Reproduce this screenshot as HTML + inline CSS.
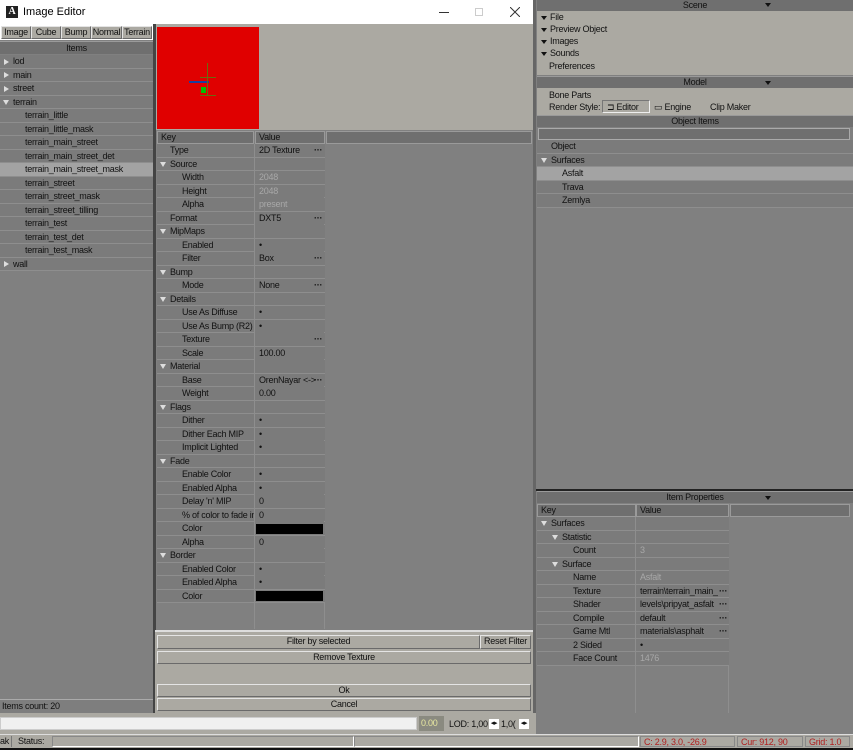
<!DOCTYPE html>
<html><head><meta charset="utf-8"><style>
*{margin:0;padding:0;box-sizing:border-box}
body{width:853px;height:750px;overflow:hidden;background:#808080;font-family:"Liberation Sans",sans-serif;font-size:9px;letter-spacing:-0.25px;color:#111;position:relative}
.a{position:absolute}
.row{position:absolute;height:13.5px;line-height:13px;border-bottom:1px solid #8e8e8e;background:#7b7b7b;white-space:nowrap;overflow:hidden}
.hd{position:absolute;background:#6f6f6f;text-align:center;line-height:12px;border-top:1px solid #9a9a9a}
.tri{display:inline-block;width:0;height:0;border-left:3px solid transparent;border-right:3px solid transparent;border-top:5px solid #ddd;margin-right:4px;vertical-align:middle}
.trr{display:inline-block;width:0;height:0;border-top:3px solid transparent;border-bottom:3px solid transparent;border-left:5px solid #ddd;margin-right:4px;vertical-align:middle}
.trk{display:inline-block;width:0;height:0;border-left:3px solid transparent;border-right:3px solid transparent;border-top:4px solid #111;margin-right:3px;vertical-align:middle}
.btn{position:absolute;background:#aba9a2;border:1px solid #e4e4e4;border-right-color:#6a6a6a;border-bottom-color:#6a6a6a;text-align:center;line-height:11px}
.g{color:#a8a8a8}
</style></head><body>
<div class="a" style="left:0;top:0;width:533px;height:24px;background:#fff"></div>
<div class="a" style="left:6px;top:6px;width:12px;height:12px;background:#222;color:#fff;font-size:10px;line-height:12px;text-align:center;font-family:'Liberation Serif',serif;font-weight:bold">A</div>
<div class="a" style="left:23px;top:6px;font-size:11px;color:#000;letter-spacing:0">Image Editor</div>
<div class="a" style="left:439px;top:12px;width:10px;height:1px;background:#333"></div>
<div class="a" style="left:475px;top:8px;width:8px;height:8px;border:1px solid #ccc"></div>
<svg class="a" style="left:510px;top:7px" width="10" height="10"><path d="M0 0L10 10M10 0L0 10" stroke="#333" stroke-width="1"/></svg>
<div class="a" style="left:533px;top:0;width:3px;height:713px;background:#666"></div>
<div class="a" style="left:0;top:24px;width:153px;height:689px;background:#808080"></div>
<div class="a" style="left:0;top:24px;width:153px;height:16px;background:#fff"></div>
<div class="btn" style="left:1px;top:26px;width:30px;height:13px">Image</div>
<div class="btn" style="left:31px;top:26px;width:30px;height:13px">Cube</div>
<div class="btn" style="left:61px;top:26px;width:30px;height:13px">Bump</div>
<div class="btn" style="left:91px;top:26px;width:31px;height:13px">Normal</div>
<div class="btn" style="left:122px;top:26px;width:30px;height:13px">Terrain</div>
<div class="hd" style="left:0;top:41px;width:153px;height:13px">Items</div>
<div class="row" style="left:0;top:55px;width:153px;padding-left:4px"><span class="trr"></span>lod</div>
<div class="row" style="left:0;top:68.5px;width:153px;padding-left:4px"><span class="trr"></span>main</div>
<div class="row" style="left:0;top:82px;width:153px;padding-left:4px"><span class="trr"></span>street</div>
<div class="row" style="left:0;top:95.5px;width:153px;padding-left:3px"><span class="tri"></span>terrain</div>
<div class="row" style="left:0;top:109px;width:153px;padding-left:25px">terrain_little</div>
<div class="row" style="left:0;top:122.5px;width:153px;padding-left:25px">terrain_little_mask</div>
<div class="row" style="left:0;top:136px;width:153px;padding-left:25px">terrain_main_street</div>
<div class="row" style="left:0;top:149.5px;width:153px;padding-left:25px">terrain_main_street_det</div>
<div class="row" style="left:0;top:163px;width:153px;padding-left:25px;background:#a3a3a3">terrain_main_street_mask</div>
<div class="row" style="left:0;top:176.5px;width:153px;padding-left:25px">terrain_street</div>
<div class="row" style="left:0;top:190px;width:153px;padding-left:25px">terrain_street_mask</div>
<div class="row" style="left:0;top:203.5px;width:153px;padding-left:25px">terrain_street_tilling</div>
<div class="row" style="left:0;top:217px;width:153px;padding-left:25px">terrain_test</div>
<div class="row" style="left:0;top:230.5px;width:153px;padding-left:25px">terrain_test_det</div>
<div class="row" style="left:0;top:244px;width:153px;padding-left:25px">terrain_test_mask</div>
<div class="row" style="left:0;top:257.5px;width:153px;padding-left:4px"><span class="trr"></span>wall</div>
<div class="a" style="left:0;top:699px;width:153px;height:14px;border-top:1px solid #aaa;line-height:13px;padding-left:2px;background:#7e7e7e">Items count: 20</div>
<div class="a" style="left:153px;top:24px;width:3px;height:689px;background:#444"></div>
<div class="a" style="left:156px;top:24px;width:377px;height:106px;background:#aba9a2"></div>
<div class="a" style="left:157px;top:27px;width:102px;height:102px;background:#e00000"></div>
<div class="a" style="left:189px;top:81px;width:20px;height:2px;background:#1a3fa0"></div>
<div class="a" style="left:207px;top:63px;width:1px;height:33px;background:#6a6a10"></div>
<div class="a" style="left:200px;top:77px;width:16px;height:1px;background:#6a6a10"></div>
<div class="a" style="left:200px;top:95px;width:16px;height:1px;background:#6a6a10"></div>
<div class="a" style="left:201px;top:87px;width:5px;height:6px;background:#00c000"></div>
<div class="a" style="left:156px;top:130px;width:377px;height:500px;background:#808080"></div>
<div class="a" style="left:157px;top:131px;width:97px;height:13px;background:#6f6f6f;border:1px solid #9a9a9a;line-height:11px;padding-left:3px">Key</div>
<div class="a" style="left:255px;top:131px;width:70px;height:13px;background:#6f6f6f;border:1px solid #9a9a9a;line-height:11px;padding-left:3px">Value</div>
<div class="a" style="left:326px;top:131px;width:206px;height:13px;background:#6f6f6f;border:1px solid #9a9a9a"></div>
<div class="a" style="left:324px;top:144px;width:1px;height:485px;background:#8e8e8e"></div>
<div id="props"></div>
<div class="a" style="left:155px;top:630px;width:378px;height:83px;background:#aba9a2;border-top:2px solid #ddd"></div>
<div class="btn" style="left:157px;top:635px;width:323px;height:14px">Filter by selected</div>
<div class="btn" style="left:480px;top:635px;width:51px;height:14px">Reset Filter</div>
<div class="btn" style="left:157px;top:651px;width:374px;height:13px">Remove Texture</div>
<div class="btn" style="left:157px;top:684px;width:374px;height:13px">Ok</div>
<div class="btn" style="left:157px;top:698px;width:374px;height:13px">Cancel</div>
<div class="a" style="left:0;top:713px;width:536px;height:21px;background:#aba9a2"></div>
<div class="a" style="left:0;top:717px;width:417px;height:13px;background:#f0f0f0;border:1px solid #ccc"></div>
<div class="a" style="left:419px;top:716px;width:25px;height:15px;background:#8a8a80;color:#e8e8a0;line-height:14px;padding-left:2px">0.00</div>
<div class="a" style="left:449px;top:719px;line-height:11px">LOD: 1,00</div>
<div class="a" style="left:489px;top:719px;width:10px;height:10px;background:#fff;font-size:7px;text-align:center;line-height:10px">◂▸</div>
<div class="a" style="left:501px;top:719px;line-height:11px">1,0(</div>
<div class="a" style="left:519px;top:719px;width:10px;height:10px;background:#fff;font-size:7px;text-align:center;line-height:10px">◂▸</div>
<div class="a" style="left:536px;top:713px;width:317px;height:21px;background:#808080"></div>
<div class="a" style="left:0;top:734px;width:853px;height:14px;background:#aba9a2;border-top:1px solid #ddd"></div>
<div class="a" style="left:0;top:736px;line-height:11px">ak</div>
<div class="a" style="left:11px;top:736px;width:40px;height:11px;border-left:1px solid #777;line-height:11px;padding-left:6px">Status:</div>
<div class="a" style="left:52px;top:736px;width:302px;height:11px;border:1px solid #888;border-right-color:#fff;border-bottom-color:#fff"></div>
<div class="a" style="left:354px;top:736px;width:285px;height:11px;border:1px solid #888;border-right-color:#fff;border-bottom-color:#fff"></div>
<div class="a" style="left:640px;top:736px;width:95px;height:11px;border:1px solid #888;color:#b02020;line-height:10px;padding-left:3px">C: 2.9, 3.0, -26.9</div>
<div class="a" style="left:737px;top:736px;width:66px;height:11px;border:1px solid #888;color:#b02020;line-height:10px;padding-left:3px">Cur: 912, 90</div>
<div class="a" style="left:805px;top:736px;width:45px;height:11px;border:1px solid #888;color:#b02020;line-height:10px;padding-left:3px">Grid: 1.0</div>
<div class="a" style="left:0;top:748px;width:853px;height:2px;background:#111"></div>
<div class="a" style="left:536px;top:0;width:317px;height:491px;background:#808080"></div>
<div class="a" style="left:537px;top:0;width:316px;height:75px;background:#aba9a2"></div>
<div class="hd" style="left:537px;top:0;width:316px;height:11px;line-height:10px;border-top:0">Scene<span class="trk" style="position:absolute;left:228px;top:3px;border-top-color:#111"></span></div>
<div class="a" style="left:541px;top:12px;line-height:11px"><span class="trk"></span>File</div>
<div class="a" style="left:541px;top:24px;line-height:11px"><span class="trk"></span>Preview Object</div>
<div class="a" style="left:541px;top:36px;line-height:11px"><span class="trk"></span>Images</div>
<div class="a" style="left:541px;top:48px;line-height:11px"><span class="trk"></span>Sounds</div>
<div class="a" style="left:549px;top:61px;line-height:11px">Preferences</div>
<div class="a" style="left:537px;top:76px;width:316px;height:39px;background:#aba9a2"></div>
<div class="hd" style="left:537px;top:76px;width:316px;height:12px;line-height:11px">Model<span class="trk" style="position:absolute;left:228px;top:4px"></span></div>
<div class="a" style="left:549px;top:90px;line-height:11px">Bone Parts</div>
<div class="a" style="left:549px;top:102px;line-height:11px">Render Style:</div>
<div class="a" style="left:602px;top:100px;width:48px;height:13px;border:1px solid #777;border-right-color:#eee;border-bottom-color:#eee;line-height:12px;padding-left:4px">⊐ Editor</div>
<div class="a" style="left:654px;top:102px;line-height:11px">▭ Engine</div>
<div class="a" style="left:710px;top:102px;line-height:11px">Clip Maker</div>
<div class="hd" style="left:537px;top:115px;width:316px;height:12px;line-height:11px">Object Items</div>
<div class="a" style="left:538px;top:128px;width:312px;height:12px;background:#6f6f6f;border:1px solid #aaa"></div>
<div class="row" style="left:537px;top:140px;width:316px;padding-left:14px">Object</div>
<div class="row" style="left:537px;top:153.5px;width:316px;padding-left:4px"><span class="tri"></span>Surfaces</div>
<div class="row" style="left:537px;top:167px;width:316px;padding-left:25px;background:#a3a3a3">Asfalt</div>
<div class="row" style="left:537px;top:180.5px;width:316px;padding-left:25px">Trava</div>
<div class="row" style="left:537px;top:194px;width:316px;padding-left:25px">Zemlya</div>
<div class="a" style="left:536px;top:489px;width:317px;height:2px;background:#222"></div>
<div class="a" style="left:536px;top:491px;width:317px;height:222px;background:#808080"></div>
<div class="hd" style="left:537px;top:491px;width:316px;height:12px;line-height:11px">Item Properties<span class="trk" style="position:absolute;left:228px;top:4px"></span></div>
<div class="a" style="left:537px;top:504px;width:99px;height:13px;background:#6f6f6f;border:1px solid #9a9a9a;line-height:11px;padding-left:3px">Key</div>
<div class="a" style="left:636px;top:504px;width:93px;height:13px;background:#6f6f6f;border:1px solid #9a9a9a;line-height:11px;padding-left:3px">Value</div>
<div class="a" style="left:730px;top:504px;width:120px;height:13px;background:#6f6f6f;border:1px solid #9a9a9a"></div>
<div class="a" style="left:728px;top:517px;width:1px;height:196px;background:#8e8e8e"></div>
<div id="ip"></div>
<script>
var P=[["Type","2D Texture",1,1],["Source",,0],["Width","2048",1,0,1],["Height","2048",1,0,1],["Alpha","present",1,0,1],["Format","DXT5",1,1],["MipMaps",,0],["Enabled","•",2],["Filter","Box",2,1],["Bump",,0],["Mode","None",2,1],["Details",,0],["Use As Diffuse","•",2],["Use As Bump (R2)","•",2],["Texture","",2,1],["Scale","100.00",2],["Material",,0],["Base","OrenNayar <->",2,1],["Weight","0.00",2],["Flags",,0],["Dither","•",2],["Dither Each MIP","•",2],["Implicit Lighted","•",2],["Fade",,0],["Enable Color","•",2],["Enabled Alpha","•",2],["Delay 'n' MIP","0",2],["% of color to fade in","0",2],["Color","#",2],["Alpha","0",2],["Border",,0],["Enabled Color","•",2],["Enabled Alpha","•",2],["Color","#",2]];
var h="";
P.forEach(function(r,i){var y=144+i*13.5;var lvl=r[2];
var pad=lvl==0?3:(r[2]==1&&!r[4]?13:25);
if(r[4])pad=25;
h+='<div class="row" style="left:157px;top:'+y+'px;width:168px;padding-left:'+pad+'px">'+(lvl==0?'<span class="tri"></span>':'')+r[0]+'</div>';
if(r[1]!==undefined){if(r[1]=="#")h+='<div class="a" style="left:256px;top:'+(y+1.5)+'px;width:67px;height:10px;background:#000"></div>';
else h+='<div class="a" style="left:255px;top:'+y+'px;width:69px;height:13px;background:#7b7b7b"></div><div class="a'+(r[4]?' g':'')+'" style="left:259px;top:'+y+'px;line-height:13px">'+r[1]+'</div>';}
if(r[3])h+='<div class="a" style="left:314px;top:'+y+'px;line-height:12px;font-weight:bold">···</div>';
});
h+='<div class="a" style="left:254px;top:144px;width:1px;height:485px;background:#8e8e8e"></div>';
document.getElementById("props").innerHTML=h;
var I=[["Surfaces",,0],["Statistic",,1],["Count","3",2,0,1],["Surface",,1],["Name","Asfalt",2,0,1],["Texture","terrain\\terrain_main_",2,1],["Shader","levels\\pripyat_asfalt",2,1],["Compile","default",2,1],["Game Mtl","materials\\asphalt",2,1],["2 Sided","•",2],["Face Count","1476",2,0,1]];
h="";
I.forEach(function(r,i){var y=517+i*13.5;var l=r[2];var pad=l==0?4:(l==1?15:36);
h+='<div class="row" style="left:537px;top:'+y+'px;width:192px;padding-left:'+pad+'px">'+(l<2?'<span class="tri"></span>':'')+r[0]+'</div>';
if(r[1]!==undefined)h+='<div class="a'+(r[4]?' g':'')+'" style="left:640px;top:'+y+'px;line-height:13px;width:78px;overflow:hidden;white-space:nowrap">'+r[1]+'</div>';
if(r[3])h+='<div class="a" style="left:719px;top:'+y+'px;line-height:12px;font-weight:bold">···</div>';
});
h+='<div class="a" style="left:635px;top:517px;width:1px;height:196px;background:#8e8e8e"></div>';
document.getElementById("ip").innerHTML=h;
</script>
</body></html>
